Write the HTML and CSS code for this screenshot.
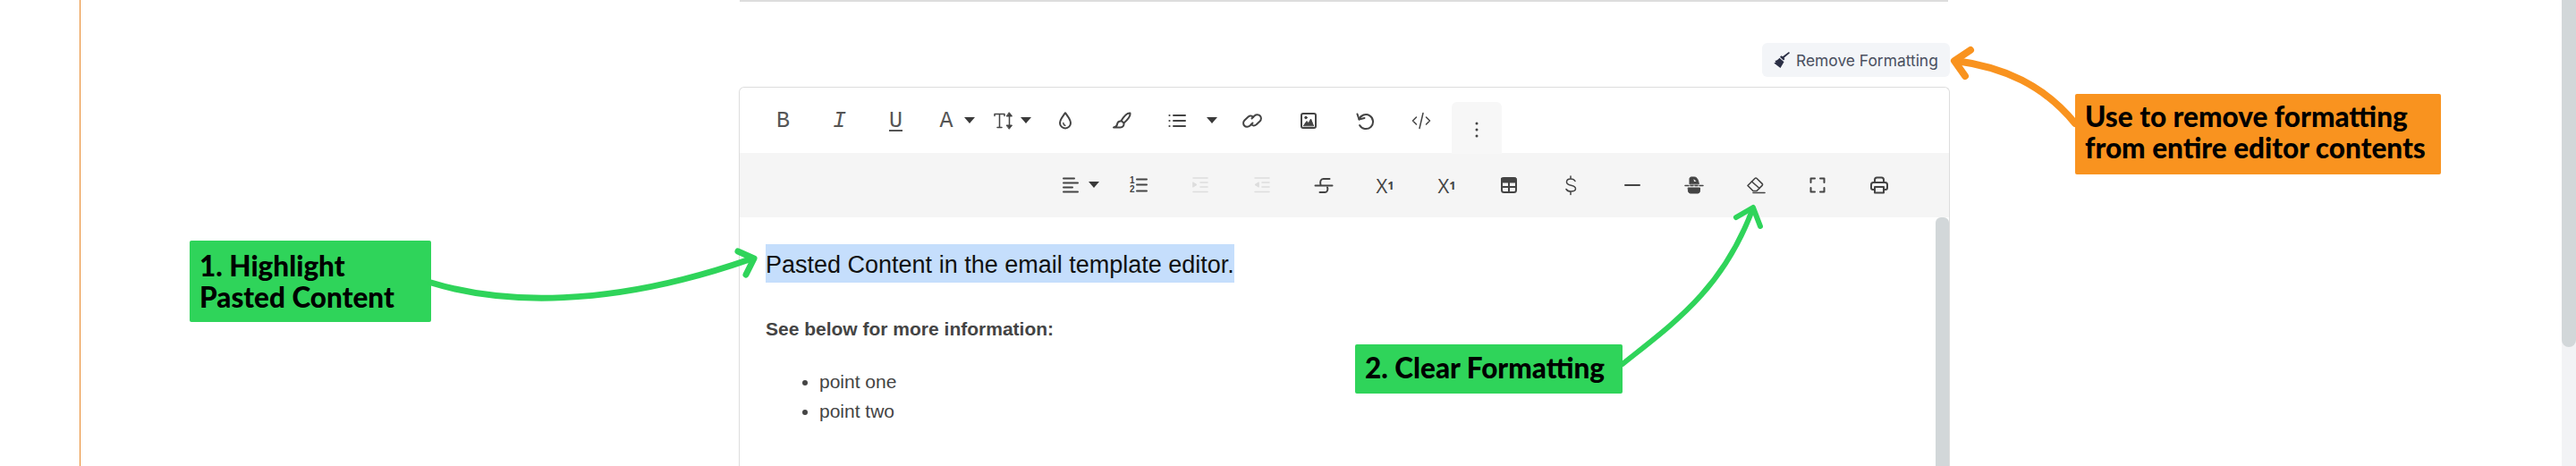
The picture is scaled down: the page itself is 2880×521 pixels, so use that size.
FILE: index.html
```html
<!DOCTYPE html>
<html lang="en">
<head>
    <meta charset="UTF-8">
    <title>Remove Formatting</title>
    <link rel="stylesheet" href="styles.css">
</head>
<body>
    <div class="shell">
        <div class="gutter"></div>
        <main class="content">
            <div class="top-rule"></div>
            <div class="actions">
                <button class="remove-btn">
                    <svg class="broom" viewBox="0 0 18 18"><path d="M17 0l1 1.200-6.500 5.500 1 1.300-1.500 1.500-4-3.800 1.500-1.500 1.500 1z"/><path d="M6.500 6.800l5 4.500-4 6.700L.3 12.500l2.200-1-1.200-1.500c2 0 3.700-1.200 5.200-3.200z"/></svg>
                    Remove Formatting
                </button>
            </div>

            <div class="editor">
                <div class="toolbar">
                    <span class="tool letter">B</span>
                    <span class="tool letter italic">I</span>
                    <span class="tool letter under">U</span>
                    <span class="tool dd"><span class="letter icon-box">A</span><i class="caret"></i></span>
                    <span class="tool dd">
                        <svg class="ico" viewBox="0 0 24 24"><path class="thin" d="M3 6.500V4.500h11v2M8.500 4.500v15M6 19.500h5"/><path class="thin" d="M19.500 5v14"/><path class="solid" d="M19.500 3l3 4h-6zM19.500 21l3-4h-6z"/></svg>
                        <i class="caret"></i>
                    </span>
                    <span class="tool">
                        <svg class="ico" viewBox="0 0 24 24"><path d="M12 3.200c3 4.200 6 7.600 6 11.200a6 6 0 0 1-12 0c0-3.600 3-7 6-11.200z"/><path class="thin" d="M9.800 14.500c0 1.400.8 2.400 2 2.700"/></svg>
                    </span>
                    <span class="tool">
                        <svg class="ico" viewBox="0 0 24 24"><path d="M21.500 3.500c-3-.6-7 3.600-10 8.500l3 2.500c4-3.500 7.600-8 7-11z"/><path d="M11 12.500c-2.500 0-3.700 1.500-4 3.500-.2 1.500-1.500 3-4 3.500h7.500c2.800 0 4.300-2.300 4-4.500"/></svg>
                    </span>
                    <span class="tool dd dd-list">
                        <svg class="ico" viewBox="0 0 24 24"><path d="M8 6h13M8 12h13M8 18h13"/><path class="dots" d="M3.500 6h.01M3.500 12h.01M3.500 18h.01"/></svg>
                        <i class="caret"></i>
                    </span>
                    <span class="tool">
                        <svg class="ico" viewBox="0 0 24 24"><path d="M11.500 9.500l3-3c1.800-1.700 5-1.500 6.300 0 1.500 1.500 1.500 4.300-.2 6l-4 3.800c-1.800 1.500-4.300 1.500-5.600-.3"/><path d="M12.500 14.500l-3 3c-1.800 1.700-5 1.500-6.300 0-1.500-1.500-1.500-4.300.2-6l4-3.800c1.800-1.500 4.300-1.500 5.600.3"/></svg>
                    </span>
                    <span class="tool">
                        <svg class="ico" viewBox="0 0 24 24"><rect x="4" y="4" width="16" height="16" rx="2"/><path class="solid" d="M6.500 17.500l3.500-5 2 2.300 2.500-4.800 3 7.500z"/><circle class="solid" cx="9" cy="8.500" r="1.300"/></svg>
                    </span>
                    <span class="tool">
                        <svg class="ico" viewBox="0 0 24 24"><path d="M5.500 10.500a8 8 0 1 1 .6 6.500"/><path d="M3.500 4.500l2 6 6-1.500"/></svg>
                    </span>
                    <span class="tool">
                        <svg class="ico" viewBox="0 0 24 24"><path class="thin" d="M6.500 8l-4 4 4 4M17.500 8l4 4-4 4M14 3.500L10 20.500"/></svg>
                    </span>
                    <span class="tool more">
                        <svg class="ico" viewBox="0 0 24 24"><path class="dots big" d="M12 5h.01M12 12h.01M12 19h.01"/></svg>
                    </span>
                </div>

                <div class="toolbar-more">
                    <span class="tool2 dd dd-align">
                        <svg class="ico" viewBox="0 0 24 24"><path d="M4 4.500h12M4 9.500h16M4 14.500h10M4 19.500h16"/></svg>
                        <i class="caret"></i>
                    </span>
                    <span class="tool2">
                        <svg class="ico" viewBox="0 0 24 24"><text class="nums" x="2" y="10">1</text><text class="nums" x="2" y="20">2</text><path d="M10 5.500h11M10 11.500h11M10 18.500h11"/></svg>
                    </span>
                    <span class="tool2 off">
                        <svg class="ico" viewBox="0 0 24 24"><path class="thin" d="M4 4h16M12 9h8M12 14h8M4 19.500h16"/><path class="solid" d="M4 9l4 2.500L4 14z"/></svg>
                    </span>
                    <span class="tool2 off">
                        <svg class="ico" viewBox="0 0 24 24"><path class="thin" d="M4 4h16M12 9h8M12 14h8M4 19.500h16"/><path class="solid" d="M8 9l-4 2.500L8 14z"/></svg>
                    </span>
                    <span class="tool2">
                        <svg class="ico" viewBox="0 0 24 24"><path d="M18.500 5h-7C8.500 5 7.500 8 8.500 12"/><path d="M2.500 12.500h19"/><path d="M16 14.500c1 2 0 5.500-2.500 5.500H7.500"/></svg>
                    </span>
                    <span class="tool2 letter-thin">X<sub>1</sub></span>
                    <span class="tool2 letter-thin">X<sup>1</sup></span>
                    <span class="tool2">
                        <svg class="ico" viewBox="0 0 24 24"><rect x="4" y="4" width="16" height="16" rx="2.500"/><path class="solid" d="M4 4h16v5H4z"/><path d="M12 9v11M4 14h16"/></svg>
                    </span>
                    <span class="tool2">
                        <svg class="ico" viewBox="0 0 24 24"><path class="thin" d="M17 7.500C16 5.500 14 5 12 5 9 5 7.500 6.500 7.500 8.500c0 5 10 2.500 10 7.500 0 2-1.500 3-5.500 3-2 0-4-.8-5-2.500M12 2v3M12 19v3.500"/></svg>
                    </span>
                    <span class="tool2">
                        <svg class="ico" viewBox="0 0 24 24"><path d="M4 12h16"/></svg>
                    </span>
                    <span class="tool2">
                        <svg class="ico" viewBox="0 0 24 24"><path class="solid" d="M7 10.500V5c0-1.200.8-2 2-2h3.500c2.500 0 4.500 3.500 4.800 7.500z"/><path class="notch" d="M11.500 5l.5 3 2.500-.2z"/><path class="thin" d="M2 12.500h4M8 12.500h3M13 12.500h3M18 12.500h4"/><path class="solid" d="M5.500 15h13v3.500c0 1.500-1 2.500-2.500 2.500H8c-1.500 0-2.500-1-2.500-2.500z"/></svg>
                    </span>
                    <span class="tool2">
                        <svg class="ico soft" viewBox="0 0 24 24"><path d="M3 12.500L11 4.500c.6-.6 1.500-.6 2.100 0l6 5.800c.6.600.6 1.500 0 2.100L13 18.500H9z"/><path d="M7.500 8l8.500 7.500"/><path d="M9 20.500h13"/></svg>
                    </span>
                    <span class="tool2">
                        <svg class="ico" viewBox="0 0 24 24"><path d="M9 4.500H4.500V9M15 4.500h4.500V9M9 19.500H4.500V15M15 19.500h4.500V15"/></svg>
                    </span>
                    <span class="tool2">
                        <svg class="ico" viewBox="0 0 24 24"><path d="M7 9V6c0-1.500 1-2.500 2.500-2.500h5C16 3.500 17 4.500 17 6v3"/><path d="M7 17H5c-1.200 0-2-.8-2-2v-3.500C3 10 4 9 5.500 9h13c1.500 0 2.500 1 2.500 2.500V15c0 1.200-.8 2-2 2h-2"/><path d="M7 14h10v6.500H7z"/></svg>
                    </span>
                </div>

                <div class="editor-body">
                    <div class="doc">
                        <p class="lead"><span class="picked">Pasted Content in the email template editor.</span></p>
                        <p class="note">See below for more information:</p>
                        <ul class="points">
                            <li>point one</li>
                            <li>point two</li>
                        </ul>
                    </div>
                    <div class="editor-scroll"></div>
                </div>
            </div>
        </main>
        <div class="page-scroll"><div class="page-thumb"></div></div>
    </div>

    <!-- callouts sit on top of the screenshot -->
    <div class="callout green step-one">1. Highlight<br>Pasted Content</div>
    <div class="callout green step-two">2. Clear Formatting</div>
    <div class="callout orange use-note">Use to remove formatting<br>from entire editor contents</div>

    <svg class="arrows" viewBox="0 0 2880 521">
        <g class="arrow-green" stroke-width="7">
            <path d="M482 316C560 340 680 345 838 290"/>
            <path d="M825 281L843 289L834 307"/>
        </g>
        <g class="arrow-green" stroke-width="6">
            <path d="M1814 407C1870 362 1925 325 1959 235"/>
            <path d="M1941 243L1960 232L1968 253"/>
        </g>
        <g class="arrow-orange" stroke-width="8">
            <path d="M2320 138C2285 95 2240 75 2187 68"/>
            <path d="M2203 56L2185 68L2197 85"/>
        </g>
    </svg>
</body>
</html>
```

FILE: styles.css
```css
* {
    box-sizing: border-box;
}

body {
    margin: 0;
    height: 521px;
    overflow: hidden;
    position: relative;
    background-color: #fff;
    font-family: "Liberation Sans", sans-serif;
}

.shell {
    display: flex;
    height: 521px;
    overflow: hidden;
}

.gutter {
    width: 89px;
    flex: none;
}

.content {
    flex: 1;
    border-left: 1px solid #e8882a;
    padding-left: 736px;
}

.top-rule {
    width: 1351px;
    height: 2px;
    margin-left: 1px;
    background-color: #ddd;
}

.actions {
    width: 1354px;
    display: flex;
    justify-content: flex-end;
    margin-top: 46px;
}

.remove-btn {
    display: flex;
    align-items: center;
    gap: 7px;
    width: 210px;
    height: 38px;
    padding: 0 0 0 13px;
    border: none;
    border-radius: 6px;
    background-color: #f3f5f8;
    color: #4a5060;
    font-family: Inter, sans-serif;
    font-size: 17.4px;
}

.broom {
    width: 18px;
    height: 18px;
    fill: #2b2f45;
}

.editor {
    width: 1354px;
    margin-top: 11px;
    border: 1px solid #ddd;
    border-bottom: none;
    border-radius: 6px 6px 0 0;
}

.toolbar {
    display: flex;
    height: 73px;
    padding-left: 17px;
}

.toolbar-more {
    display: flex;
    justify-content: flex-end;
    height: 72px;
    padding-right: 44px;
    background-color: #f5f5f5;
}

.tool,
.tool2 {
    display: flex;
    align-items: center;
    justify-content: center;
    height: 100%;
    color: #444;
    padding-bottom: 2px;
}

.tool {
    width: 63px;
    height: 76px;
}

.tool2 {
    width: 69px;
    padding-bottom: 0;
}

.tool2.off {
    color: #ddd;
}

.dd {
    width: 63px;
    justify-content: flex-start;
    gap: 7px;
    padding-left: 13px;
}

.dd-list {
    width: 83px;
    padding-left: 19px;
    gap: 20px;
}

.dd-align {
    width: 69px;
    padding-left: 16px;
}

.more {
    width: 56px;
    height: 58px;
    margin: 16px 0 0 3px;
    padding: 4px 0 0;
    border-radius: 6px 6px 0 0;
    background-color: #f7f7f7;
}

.caret {
    width: 0;
    height: 0;
    flex: none;
    margin: 0 1px 2px;
    border-left: 6px solid transparent;
    border-right: 6px solid transparent;
    border-top: 7px solid #3a3a3a;
}

.letter {
    font-family: "Liberation Mono", monospace;
    font-size: 25px;
    color: #555;
}

.italic {
    font-style: italic;
}

.under {
    text-decoration: underline;
    text-underline-offset: 3px;
}

.icon-box {
    width: 24px;
    text-align: center;
}

.letter-thin {
    font-family: "Open Sans", sans-serif;
    font-size: 22px;
}

.letter-thin sub,
.letter-thin sup {
    font-size: 13px;
    font-weight: 700;
    line-height: 0;
}

.letter-thin sub {
    vertical-align: -5px;
}

.letter-thin sup {
    vertical-align: 8px;
}

.ico {
    width: 24px;
    height: 24px;
    flex: none;
    fill: none;
    stroke: currentColor;
    stroke-width: 2;
    stroke-linecap: round;
    stroke-linejoin: round;
}

.ico.soft {
    stroke-width: 1.6;
}

.ico .thin {
    stroke-width: 1.5;
}

.ico .solid {
    fill: currentColor;
    stroke-width: 1;
}

.ico .notch {
    fill: #f5f5f5;
    stroke: none;
}

.ico .dots {
    stroke-width: 2.2;
}

.ico .big {
    stroke-width: 3;
}

.ico .nums {
    fill: currentColor;
    stroke: none;
    font-family: "Liberation Sans", sans-serif;
    font-size: 10px;
    font-weight: 700;
}

.editor-body {
    display: flex;
    height: 300px;
}

.doc {
    flex: 1;
    padding: 30px 0 0 29px;
}

.lead {
    margin: 0;
    font-size: 27px;
    line-height: 40px;
    color: #111;
}

.picked {
    display: inline-block;
    padding-top: 3px;
    background-color: #c5defc;
}

.note {
    margin: 35px 0 0;
    font-size: 21px;
    font-weight: 700;
    line-height: 33px;
    color: #444;
}

.points {
    margin: 26px 0 0;
    padding-left: 60px;
    font-size: 21px;
    line-height: 33px;
    color: #444;
}

.editor-scroll {
    width: 15px;
    flex: none;
    border-radius: 6px 6px 0 0;
    background-color: #d2d7d9;
}

.page-scroll {
    width: 16px;
    flex: none;
    background-color: #f2f3f5;
}

.page-thumb {
    height: 388px;
    border-radius: 0 0 8px 8px;
    background-color: #d2d7d9;
}

.callout {
    position: absolute;
    border-radius: 2px;
    color: #000;
    font-family: Lato, sans-serif;
    font-size: 31.5px;
    font-weight: 900;
    line-height: 35px;
}

.green {
    background-color: #2fd45a;
}

.orange {
    background-color: #f9931f;
}

.step-one {
    left: 212px;
    top: 269px;
    width: 270px;
    height: 91px;
    padding: 11px 0 0 11px;
}

.step-two {
    left: 1515px;
    top: 385px;
    width: 299px;
    height: 55px;
    padding: 9px 0 0 11px;
}

.use-note {
    left: 2320px;
    top: 105px;
    width: 409px;
    height: 90px;
    padding: 8px 0 0 11px;
}

.arrows {
    position: absolute;
    left: 0;
    top: 0;
    width: 2880px;
    height: 521px;
    fill: none;
    stroke-linecap: round;
    stroke-linejoin: round;
}

.arrow-green {
    stroke: #2fd45a;
}

.arrow-orange {
    stroke: #f9931f;
}
```
